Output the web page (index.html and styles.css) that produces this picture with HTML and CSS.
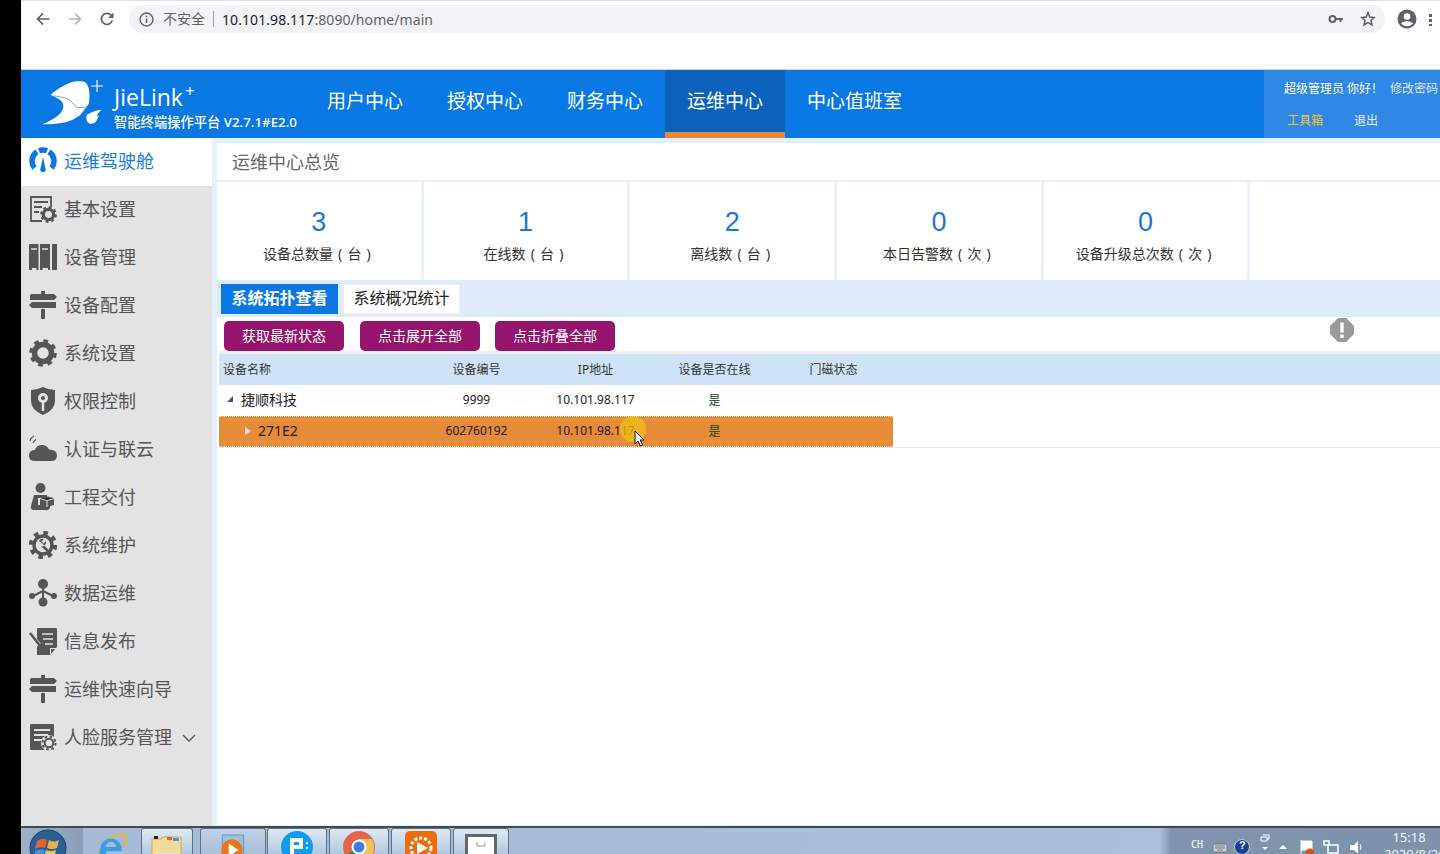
FILE: index.html
```html
<!DOCTYPE html>
<html lang="zh-CN">
<head>
<meta charset="utf-8">
<title>JieLink+</title>
<link rel="stylesheet" href="styles.css">
</head>
<body>
<svg class="defs" aria-hidden="true">
  <symbol id="gear" viewBox="0 0 28 28">
    <circle cx="14" cy="14" r="8.500" fill="none" stroke="currentColor" stroke-width="5.500"/>
    <circle cx="14" cy="14" r="11.800" fill="none" stroke="currentColor" stroke-width="4" stroke-dasharray="4.600 4.670"/>
  </symbol>
  <symbol id="post" viewBox="0 0 28 28">
    <path fill="currentColor" d="M12 0h4v3h9l3 3-3 3H1V4.500q0-1.500 1.500-1.500H12zM3 11h24v6H3l-3-3zM12 18h4v10h-4z"/>
  </symbol>
</svg>
<div class="screen">
  <div class="edge"></div>
  <div class="desktop">
    <div class="chrome">
      <div class="toolbar">
        <svg class="tool-ic" viewBox="0 0 16 16"><path d="M14.500 8H2.500M8 2.500 2.500 8 8 13.500" fill="none" stroke="#5f6368" stroke-width="1.700"/></svg>
        <svg class="tool-ic" viewBox="0 0 16 16"><path d="M1.500 8h12M8 2.500 13.500 8 8 13.500" fill="none" stroke="#b5b8bb" stroke-width="1.700"/></svg>
        <svg class="tool-ic" viewBox="0 0 16 16"><path d="M13.200 9.500A5.500 5.500 0 1 1 12 4.200" fill="none" stroke="#5f6368" stroke-width="1.800"/><path d="M14.500 1.500v5.500H9z" fill="#5f6368"/></svg>
        <div class="omnibox">
          <svg class="info-ic" viewBox="0 0 14 14"><circle cx="7" cy="7" r="6" fill="none" stroke="#5f6368" stroke-width="1.300"/><path d="M7 6v4.200M7 3.600v1.300" stroke="#5f6368" stroke-width="1.400"/></svg>
          <span class="insecure">不安全</span>
          <span class="url"><span class="url-host">10.101.98.117</span>:8090/home/main</span>
          <svg class="key-ic" viewBox="0 0 16 16"><circle cx="4.500" cy="8" r="3" fill="none" stroke="#5f6368" stroke-width="2"/><path d="M7 7h8v2h-1.500v2h-2V9H7z" fill="#5f6368"/></svg>
          <svg class="star-ic" viewBox="0 0 16 16"><path d="m8 1.800 1.800 4.300 4.600.4-3.500 3 1.100 4.500L8 11.600 4 14l1.100-4.500-3.500-3 4.600-.4z" fill="none" stroke="#5f6368" stroke-width="1.500"/></svg>
        </div>
        <svg class="avatar-ic" viewBox="0 0 20 20"><circle cx="10" cy="10" r="9.500" fill="#5f6368"/><circle cx="10" cy="7.500" r="3.300" fill="#fff"/><path d="M3.800 14.500Q10 9.500 16.200 14.500 10 20 3.800 14.500z" fill="#fff"/></svg>
        <span class="more-dots"></span>
      </div>
    </div>

    <header class="topbar">
      <div class="brand">
        <svg class="logo" viewBox="0 0 65 50">
          <path fill="#fff" d="M10.700 16.700C15 13 19 10 23.300 8 28 5.500 32 3.800 36.700 3.300 40 3 43 3 45 4c2.500 2 4 6 4.300 10 .3 4.500.2 8.500-.6 11.700l-2 3L40 37.300c-4 3-8.500 5.300-13.300 6.700-7.500 1.800-16 2.500-24.700 2.300 7-2.500 13-6 18-10.600 2.500-3 3.500-5.700 3.300-8.400-.2-2.600-2-5-5-6.600-2.500-1.500-5-2.700-7.600-4z"/>
          <path fill="none" stroke="#3f95e8" stroke-width=".8" d="M14 18c5 .5 10 1.200 14.300 3.300 3.500 2 5.500 5.500 8.400 7.700 3 1 7 .8 10-.3"/>
          <path fill="#fff" d="M46.700 37c4-3 10-5 15-5.300-2 1.600-4 3.500-5 6 .8.200 1.200 0 2-.2-1 3-2 5.500-4.200 7.500-3 1.600-6.500.8-7.500-2-.8-2-.8-4.300-.3-6z"/>
          <path stroke="#fff" stroke-width="1.100" d="M57 2v12M51 8h12"/>
        </svg>
        <div class="brand-text">
          <div class="brand-name">JieLink<sup class="brand-plus">+</sup></div>
          <div class="brand-sub">智能终端操作平台 V2.7.1#E2.0</div>
        </div>
      </div>
      <nav class="mainnav">
        <a class="nav-item">用户中心</a>
        <a class="nav-item">授权中心</a>
        <a class="nav-item">财务中心</a>
        <a class="nav-item nav-active">运维中心</a>
        <a class="nav-item">中心值班室</a>
      </nav>
      <div class="usermenu">
        <div class="user-row"><span class="user-hello">超级管理员 你好！</span><span class="user-link">修改密码</span></div>
        <div class="user-row user-row2"><span class="user-tools">工具箱</span><span class="user-exit">退出</span></div>
      </div>
    </header>

    <div class="workspace">
      <aside class="sidebar">
        <a class="side-item side-active">
          <svg class="side-ic" viewBox="0 0 28 28"><path fill="none" stroke="currentColor" stroke-width="5.500" d="M5.500 21A11 11 0 0 1 8 4.800M10 3.750A11 11 0 0 1 18 3.750M20 4.800A11 11 0 0 1 22.500 21"/><path fill="currentColor" d="M14 10l2.400 11a2.800 2.800 0 1 1-4.800 0z"/></svg>
          运维驾驶舱</a>
        <a class="side-item">
          <svg class="side-ic" viewBox="0 0 28 28"><path fill="none" stroke="currentColor" stroke-width="1.800" d="M13 26H2V2h20v10"/><path stroke="currentColor" stroke-width="2" d="M5 7h14M5 12h8M5 17h5"/><use href="#gear" x="11" y="11" width="17" height="17"/></svg>
          基本设置</a>
        <a class="side-item">
          <svg class="side-ic" viewBox="0 0 28 28"><path fill="currentColor" d="M0 2q0-1 1-1h8.500v26H7.500v-2H3v2H0zM11 1h10v26h-2v-2h-5.500v2H11zM23 1h5v26h-5z"/><path stroke="#e3e3e3" stroke-width="1.500" d="M2 6h6M13 6h6"/></svg>
          设备管理</a>
        <a class="side-item"><svg class="side-ic" viewBox="0 0 28 28"><use href="#post"/></svg>设备配置</a>
        <a class="side-item"><svg class="side-ic" viewBox="0 0 28 28"><use href="#gear"/></svg>系统设置</a>
        <a class="side-item">
          <svg class="side-ic" viewBox="0 0 28 28"><path fill="currentColor" d="M14 0q6 3 12 3v11q0 9-12 14Q2 23 2 14V3q6 0 12-3z"/><circle cx="14" cy="11" r="5" fill="#e3e3e3"/><circle cx="14" cy="11" r="2" fill="currentColor"/><path stroke="#e3e3e3" stroke-width="2.500" d="M14 15v9"/></svg>
          权限控制</a>
        <a class="side-item">
          <svg class="side-ic" viewBox="0 0 28 28"><path fill="currentColor" d="M6 26q-6 0-6-5.500Q0 15 6 15q1.500-5 7-5 5 0 7 4.500 8 0 8 6 0 5.500-6 5.500z"/><path fill="none" stroke="currentColor" stroke-width="1.200" d="M1 6q1-3.500 4-5M4 8q1-2.500 3-3.500"/></svg>
          认证与联云</a>
        <a class="side-item">
          <svg class="side-ic" viewBox="0 0 28 28"><circle cx="11.500" cy="5" r="5" fill="currentColor"/><path fill="currentColor" d="M5 12h13v3H9v7h12v3q-2 3-5 2H4q-3-1-2-4z"/><path fill="currentColor" d="M11 15l6-2 8 2v7l-7 2-7-2z"/><path stroke="#e3e3e3" d="M11 15.500l7 2 7-2M18 17.500V24"/></svg>
          工程交付</a>
        <a class="side-item">
          <svg class="side-ic" viewBox="0 0 28 28"><circle cx="14" cy="14" r="9" fill="none" stroke="currentColor" stroke-width="3.500"/><circle cx="14" cy="14" r="12" fill="none" stroke="currentColor" stroke-width="4.500" stroke-dasharray="4.500 4.920"/><path fill="currentColor" d="M10 10a4 4 0 0 1 5-2l-2.500 2.500 2 2L17 10a4 4 0 0 1-5 5l9 9 1.800-1.800-9-9.200"/></svg>
          系统维护</a>
        <a class="side-item">
          <svg class="side-ic" viewBox="0 0 28 28"><path stroke="currentColor" stroke-width="2" d="M14 6v16M14 12 4 17M14 12l10 5"/><circle cx="14" cy="5" r="5" fill="currentColor"/><circle cx="14" cy="23" r="4.500" fill="currentColor"/><circle cx="3" cy="17" r="3" fill="currentColor"/><circle cx="25" cy="17" r="3" fill="currentColor"/></svg>
          数据运维</a>
        <a class="side-item">
          <svg class="side-ic" viewBox="0 0 28 28"><path fill="currentColor" d="M8 2q0-1 1-1h18q1 0 1 1v18l-7 8H8z"/><path stroke="#e3e3e3" stroke-width="1.500" d="M13 7h11M14 12h10M16 17h8"/><path stroke="#e3e3e3" stroke-width="4.500" d="M0 6l10 12"/><path stroke="currentColor" stroke-width="2.500" d="M1 6l11 14"/><path fill="#e3e3e3" d="M21 27v-6h6v1h-5v5z"/></svg>
          信息发布</a>
        <a class="side-item"><svg class="side-ic" viewBox="0 0 28 28"><use href="#post"/></svg>运维快速向导</a>
        <a class="side-item">
          <svg class="side-ic" viewBox="0 0 28 28"><path fill="currentColor" d="M1 2q0-1 1-1h22q1 0 1 1v25H2q-1 0-1-1z"/><path stroke="#e3e3e3" stroke-width="2" d="M5 7h16M5 12h14M5 17h8"/><circle cx="20" cy="20" r="8" fill="#e3e3e3"/><circle cx="20" cy="20" r="4.300" fill="none" stroke="currentColor" stroke-width="2"/><circle cx="20" cy="20" r="6.500" fill="none" stroke="currentColor" stroke-width="2" stroke-dasharray="2.500 2.600"/></svg>
          人脸服务管理
          <svg class="side-chevron" viewBox="0 0 14 8"><path d="M1 1l6 6 6-6" fill="none" stroke="#555" stroke-width="1.300"/></svg>
        </a>
      </aside>

      <main class="content">
        <div class="page-title">运维中心总览</div>
        <section class="stats">
          <div class="stat"><div class="stat-num">3</div><div class="stat-label">设备总数量 ( 台 )</div></div>
          <div class="stat"><div class="stat-num">1</div><div class="stat-label">在线数 ( 台 )</div></div>
          <div class="stat"><div class="stat-num">2</div><div class="stat-label">离线数 ( 台 )</div></div>
          <div class="stat"><div class="stat-num">0</div><div class="stat-label">本日告警数 ( 次 )</div></div>
          <div class="stat"><div class="stat-num">0</div><div class="stat-label">设备升级总次数 ( 次 )</div></div>
          <div class="stat stat-empty"></div>
        </section>
        <div class="tabs">
          <span class="tab tab-active">系统拓扑查看</span>
          <span class="tab">系统概况统计</span>
        </div>
        <section class="panel">
          <div class="actions">
            <button class="btn">获取最新状态</button>
            <button class="btn">点击展开全部</button>
            <button class="btn">点击折叠全部</button>
            <svg class="alert-ic" viewBox="0 0 24 24"><path fill="#9a9a9a" d="M8 0h8l8 8v8l-8 8H8l-8-8V8z"/><path stroke="#fff" stroke-width="3.400" d="M12 4.500v10M12 16.500v3.500"/></svg>
          </div>
          <div class="grid-head">
            <span class="cell cell-name">设备名称</span>
            <span class="cell">设备编号</span>
            <span class="cell">IP地址</span>
            <span class="cell">设备是否在线</span>
            <span class="cell">门磁状态</span>
          </div>
          <div class="grid-row">
            <span class="cell cell-name cell-tree"><i class="tri-open"></i>捷顺科技</span>
            <span class="cell">9999</span>
            <span class="cell">10.101.98.117</span>
            <span class="cell cell-yes">是</span>
            <span class="cell"></span>
          </div>
          <div class="grid-row grid-row-sel">
            <span class="cell cell-name cell-child"><i class="tri-closed"></i>271E2</span>
            <span class="cell">602760192</span>
            <span class="cell">10.101.98.117</span>
            <span class="cell cell-yes">是</span>
            <span class="cell"></span>
          </div>
          <div class="grid-rule"></div>
        </section>
      </main>
    </div>

    <footer class="taskbar">
      <div class="task-start">
        <svg class="orb" viewBox="0 0 38 38"><circle cx="19" cy="19" r="18" fill="#2a5f96" stroke="#1c3b5e"/><path d="M8 12q6-4 10-1l-2 8q-4-2-10 1z" fill="#e2632b"/><path d="M20 11q5 3 10 0l-2 8q-5 2-10 0z" fill="#e8b04a"/><path d="M6 22q5-3 10-1l-2 8q-5-2-8 0z" fill="#3f93d6"/><path d="M17 21q5 2 10 0l-2 8q-5 2-10 0z" fill="#e6c95a"/></svg>
      </div>
      <div class="task-btn task-w56">
        <svg class="task-ic" viewBox="0 0 30 30"><path d="M4 30Q3 12 15 6q8-4 13-3 2 4-2 12" fill="none" stroke="#f0b429" stroke-width="2"/><path d="M5 17a10 10 0 0 1 20 0v2H10q1 6 7 6 5 0 7-3v6q-13 6-19-3-2-4 0-8zm5-2h10q-1-5-5-5t-5 5z" fill="#3d9be0"/></svg>
      </div>
      <div class="task-btn task-open task-w52">
        <svg class="task-ic task-ic-low" viewBox="0 0 32 30"><path d="M1 4h9l2-2h18v28H1z" fill="#f3dc9b" stroke="#c9a860"/><path d="M3 1h4v3H3z" fill="#222"/><path d="M22 3h6v3h-6z" fill="#3d9be0"/><path d="M16 2h5v3h-5z" fill="#e2632b"/><path d="M4 18h24v8H4z" fill="#cfe6f5"/></svg>
      </div>
      <div class="task-btn task-open task-w66">
        <svg class="task-ic task-ic-low" viewBox="0 0 28 30"><path d="M4 1h20v29H4z" fill="#9cc0df" stroke="#6d97bd"/><circle cx="13" cy="15" r="10" fill="#e8771f"/><path d="M10 9l9 6-9 6z" fill="#fff"/></svg>
      </div>
      <div class="task-btn task-open task-w60">
        <svg class="task-ic" viewBox="0 0 32 32"><circle cx="16" cy="16" r="16" fill="#109cf0"/><path d="M9 7h13v11H13v7H9zm4 4v3h5v-3z" fill="#fff"/><path d="M25 11h2v2h-2zM25 16h2v2h-2z" fill="#fff"/></svg>
      </div>
      <div class="task-btn task-open task-w60">
        <svg class="task-ic" viewBox="0 0 32 32"><circle cx="16" cy="16" r="16" fill="#e4634f"/><path d="M16 16 2 24a16 16 0 0 0 14 8z" fill="#3c8b5e"/><path d="M16 8h13a16 16 0 0 1-13 24z" fill="#f0c25e"/><circle cx="16" cy="16" r="7.500" fill="#fff"/><circle cx="16" cy="16" r="5.500" fill="#3c7fe0"/></svg>
      </div>
      <div class="task-btn task-open task-w60">
        <svg class="task-ic" viewBox="0 0 32 32"><rect width="32" height="32" rx="5" fill="#ef6c0c"/><circle cx="16" cy="17" r="10" fill="none" stroke="#fff" stroke-width="3" stroke-dasharray="3 2"/><path d="M12 11l11 6-11 6z" fill="#fff"/></svg>
      </div>
      <div class="task-btn task-open task-w56">
        <svg class="task-ic task-ic-low" viewBox="0 0 32 32"><rect x="1.500" y="1.500" width="29" height="30" fill="#fff" stroke="#666" stroke-width="3"/><path d="M12 8v4h8V8" fill="none" stroke="#999"/></svg>
      </div>
      <div class="tray">
        <span class="tray-lang">CH</span>
        <svg class="tray-ic" viewBox="0 0 16 12"><rect x="1" y="3" width="14" height="8" rx="1" fill="#cfd4da" stroke="#777"/><path d="M3 5h10M3 7h10M5 9h6" stroke="#777"/></svg>
        <svg class="tray-ic" viewBox="0 0 16 16"><circle cx="8" cy="8" r="7.500" fill="#1b3f9c" stroke="#c8ced5"/></svg>
        <span class="tray-ask">?</span>
        <svg class="tray-ic tray-win" viewBox="0 0 10 18"><path d="M3 1h6v4H7M1 3h6v4H1z" fill="none" stroke="#fff"/><path d="M2 13h6l-3 3z" fill="#fff"/></svg>
        <svg class="tray-ic tray-up" viewBox="0 0 10 6"><path d="M5 1l4 4H1z" fill="#fff"/></svg>
        <svg class="tray-ic tray-flag" viewBox="0 0 16 18"><path d="M2 1v17M2 2h11v9H2" fill="#fff" stroke="#fff"/><circle cx="11" cy="14" r="4.500" fill="#d9531e"/></svg>
        <svg class="tray-ic tray-net" viewBox="0 0 16 18"><path d="M1 2h5v4H1zM5 6h10v8H5zM8 14h4v3H8z" fill="none" stroke="#fff" stroke-width="1.500"/></svg>
        <svg class="tray-ic tray-flag" viewBox="0 0 16 18"><path d="M1 6h4l4-4v13l-4-4H1z" fill="#fff"/><path d="M11 5q2 3 0 6" fill="none" stroke="#fff"/></svg>
        <div class="clock"><div>15:18</div><div>2020/8/26</div></div>
      </div>
    </footer>
  </div>

  <div class="cursor-halo"></div>
  <svg class="cursor-arrow" viewBox="0 0 12 17"><path d="M1 1v13l3-3 2.500 5 2.200-1-2.400-5H10z" fill="#fff" stroke="#111"/></svg>
</div>
</body>
</html>
```
FILE: styles.css
```css
* { box-sizing: border-box; }
html, body { margin: 0; height: 100%; overflow: hidden; }
body { font-family: "Noto Sans", "Noto Sans CJK SC", sans-serif; color: #333; background: #000; }
.defs { display: none; }
.screen { position: relative; display: flex; width: 1440px; height: 854px; overflow: hidden; }
.edge { width: 21px; background: #000; flex: none; }
.desktop { width: 1419px; display: flex; flex-direction: column; background: #fff; }

/* browser */
.chrome { height: 70px; flex: none; background: #fff; border-top: 1px solid #dfe1e3; border-bottom: 1px solid #cfd2d4; }
.toolbar { display: flex; align-items: center; height: 36px; padding-left: 14px; }
.tool-ic { width: 16px; height: 16px; margin-right: 16px; flex: none; }
.omnibox { display: flex; align-items: center; width: 1256px; height: 28px; margin-left: -2px; border-radius: 14px; background: #f1f3f4; padding: 0 10px; }
.info-ic { width: 15px; height: 15px; margin-right: 9px; flex: none; }
.insecure { font-size: 14px; color: #5f6368; padding-right: 8px; border-right: 1px solid #9aa0a6; line-height: 16px; }
.url { font-size: 14px; color: #5f6368; margin-left: 8px; letter-spacing: .08px; }
.url-host { color: #202124; }
.key-ic { width: 16px; height: 16px; margin-left: auto; }
.star-ic { width: 16px; height: 16px; margin-left: 16px; margin-right: -1px; }
.avatar-ic { width: 20px; height: 20px; margin-left: 12px; flex: none; }
.more-dots { width: 3px; height: 13px; margin-left: 12px; background: radial-gradient(circle, #5f6368 1.500px, transparent 1.600px) 0 0 / 3px 5px; flex: none; }

/* header */
.topbar { display: flex; height: 68px; flex: none; background: #0a78e2; color: #fff; }
.brand { display: flex; width: 284px; flex: none; padding: 8px 0 0 19px; }
.logo { width: 65px; height: 50px; flex: none; }
.brand-text { margin-left: 9px; white-space: nowrap; }
.brand-name { font-family: "Open Sans", sans-serif; font-size: 23px; line-height: 28px; margin-top: 5px; }
.brand-plus { font-size: 17px; line-height: 0; vertical-align: 9px; margin-left: 2px; }
.brand-sub { font-size: 13.300px; line-height: 16px; margin-top: 3px; font-weight: 500; }
.mainnav { display: flex; flex: 1; }
.nav-item { padding: 0 22px; font-size: 19px; line-height: 62px; white-space: nowrap; }
.nav-active { background: #0b62bb; border-bottom: 6px solid #e8863a; }
.usermenu { width: 176px; flex: none; background: #2f88e6; font-size: 12px; padding: 9px 0 0 20px; white-space: nowrap; }
.user-row { display: flex; line-height: 20px; }
.user-hello { width: 106px; }
.user-link { color: #dfe5ec; }
.user-row2 { margin-top: 12px; padding-left: 3px; }
.user-tools { width: 67px; color: #f2c230; }
.user-exit { color: #e6edf5; }

/* workspace */
.workspace { display: flex; flex: 1; min-height: 0; }
.sidebar { width: 191px; flex: none; background: #e3e3e3; }
.side-item { display: flex; align-items: center; height: 48px; padding: 0 0 5px 8px; font-size: 18px; color: #555; white-space: nowrap; }
.side-active { background: #fff; color: #1a7ee0; }
.side-ic { width: 28px; height: 28px; margin: 2px 7px 0 0; flex: none; color: #555; }
.side-active .side-ic { color: #0a78e2; }
.side-chevron { width: 14px; height: 8px; margin-left: 10px; margin-top: 4px; }

.content { flex: 1; min-width: 0; display: flex; flex-direction: column; background: #fff; border-left: 5px solid #e4f0fd; border-top: 5px solid #e4f0fd; border-bottom: 1px solid #e4f0fd; }
.page-title { height: 39px; flex: none; font-size: 18px; line-height: 39px; padding-left: 15px; color: #666; border-bottom: 2px solid #e8f0fa; }
.stats { display: flex; height: 98px; flex: none; gap: 3px; background: #e8f1fc; }
.stat { width: 203.700px; flex: none; background: #fff; text-align: center; }
.stat-empty { flex: 1; }
.stat-num { font-size: 27px; line-height: 32px; margin-top: 24px; color: #1a78d8; font-family: "Liberation Sans", sans-serif; }
.stat-label { font-size: 14px; line-height: 20px; margin-top: 6px; padding-right: 4px; color: #333; word-spacing: 1.500px; }
.tabs { display: flex; height: 37px; flex: none; gap: 5px; padding: 4px 0 0 4px; background: #dfeafb; }
.tab { width: 117px; height: 30px; background: #fff; border: 1px solid #e8f0fa; font-size: 16px; line-height: 26px; text-align: center; color: #222; }
.tab-active { background: #0a78e2; border-color: #0a78e2; color: #fff; font-weight: 700; }
.panel { position: relative; flex: 1; margin-left: 2px; background: #fff; }
.actions { display: flex; align-items: flex-start; height: 37px; padding: 4px 0 0 5px; gap: 16px; border-bottom: 3px solid #eee; }
.btn { width: 120px; height: 30px; padding: 0 0 2px; border: 0; border-radius: 5px; background: #94146e; color: #fff; font: 14px "Noto Sans", "Noto Sans CJK SC", sans-serif; }
.btn:last-of-type { margin-left: -1px; }
.alert-ic { position: absolute; left: 1111px; top: 1px; width: 24px; height: 24px; }
.grid-head, .grid-row { display: grid; grid-template-columns: 198px repeat(4, 119px); align-items: center; padding-bottom: 2px; }
.grid-head { height: 31px; background: #cfe3f8; font-size: 12px; color: #333; }
.grid-row { height: 31px; width: 674px; font-size: 12px; color: #222; }
.cell { text-align: center; white-space: nowrap; }
.cell-name { text-align: left; padding-left: 4px; display: flex; align-items: center; }
.cell-tree { padding-left: 8px; margin-top: -1px; font-size: 14px; color: #222; }
.cell-child { padding-left: 26px; font-size: 14px; color: #222; }
.cell-yes { color: #0c4a10; }
.tri-open { width: 0; height: 0; margin-right: 8px; border-style: solid; border-width: 0 0 6px 6px; border-color: transparent transparent #555 transparent; }
.tri-closed { width: 0; height: 0; margin-right: 7px; border-style: solid; border-width: 4.500px 0 4.500px 6px; border-color: transparent transparent transparent #e9e2da; }
.grid-row-sel { background: #e68b37; border-top: 1px dotted #f3d9b8; border-bottom: 1px dotted #f3d9b8; }
.grid-rule { height: 1px; background: #e6e6e6; }

/* overlay pointer */
.cursor-halo { position: absolute; left: 620px; top: 416px; width: 26px; height: 26px; border-radius: 50%; background: rgba(242, 196, 18, .72); }
.cursor-arrow { position: absolute; left: 634px; top: 430px; width: 12px; height: 17px; }

/* taskbar */
.taskbar { display: flex; height: 28px; flex: none; overflow: hidden; background: linear-gradient(90deg, #a4bbd6 0, #a9c0da 80%, #9fb5cf 100%); border-top: 2px solid #3f4a57; }
.task-start { width: 62px; flex: none; background: linear-gradient(90deg, #9db1c9, #8a9fb7); padding: 1px 0 0 8px; }
.orb { width: 38px; height: 38px; display: block; }
.task-btn { flex: none; padding-top: 3px; display: flex; justify-content: center; margin-right: 2px; }
.task-open { border: 1px solid #5d7186; border-bottom: 0; border-radius: 3px 3px 0 0; background: linear-gradient(#dfeaf4, #b2c8e0); padding-top: 2px; }
.task-w52 { width: 52px; margin-right: 7px; }
.task-w56 { width: 56px; }
.task-w60 { width: 60px; }
.task-w66 { width: 66px; margin-right: 1px; background: linear-gradient(#c0d2e6, #a9c0da); }
.task-ic { width: 32px; height: 32px; flex: none; }
.task-ic-low { margin-top: 3px; }
.tray { position: relative; display: flex; align-items: flex-start; margin-left: auto; width: 280px; padding-top: 11px; padding-left: 31px; background: linear-gradient(90deg, #a9c0da 0, #7f95ad 4%, #7d93ab 100%); color: #fff; }
.tray-lang { font-family: "DejaVu Sans Mono", monospace; font-size: 10px; line-height: 12px; width: 21px; flex: none; }
.tray-ic { width: 16px; height: 16px; margin-right: 6px; flex: none; }
.tray-ask { position: absolute; left: 79px; top: 10px; font: 700 11px/14px "Liberation Sans", sans-serif; color: #fff; }
.tray-win { width: 10px; height: 18px; margin: -5px 8px 0 4px; }
.tray-up { width: 10px; height: 6px; margin: 5px 11px 0 0; }
.tray-flag { width: 16px; height: 18px; margin: 0 8px 0 0; }
.tray-net { width: 16px; height: 18px; margin: 0 10px 0 0; }
.clock { position: absolute; right: 6px; top: 1px; width: 50px; text-align: center; font: 13px/17px "Noto Sans", sans-serif; color: #eef3f8; white-space: nowrap; }
```
